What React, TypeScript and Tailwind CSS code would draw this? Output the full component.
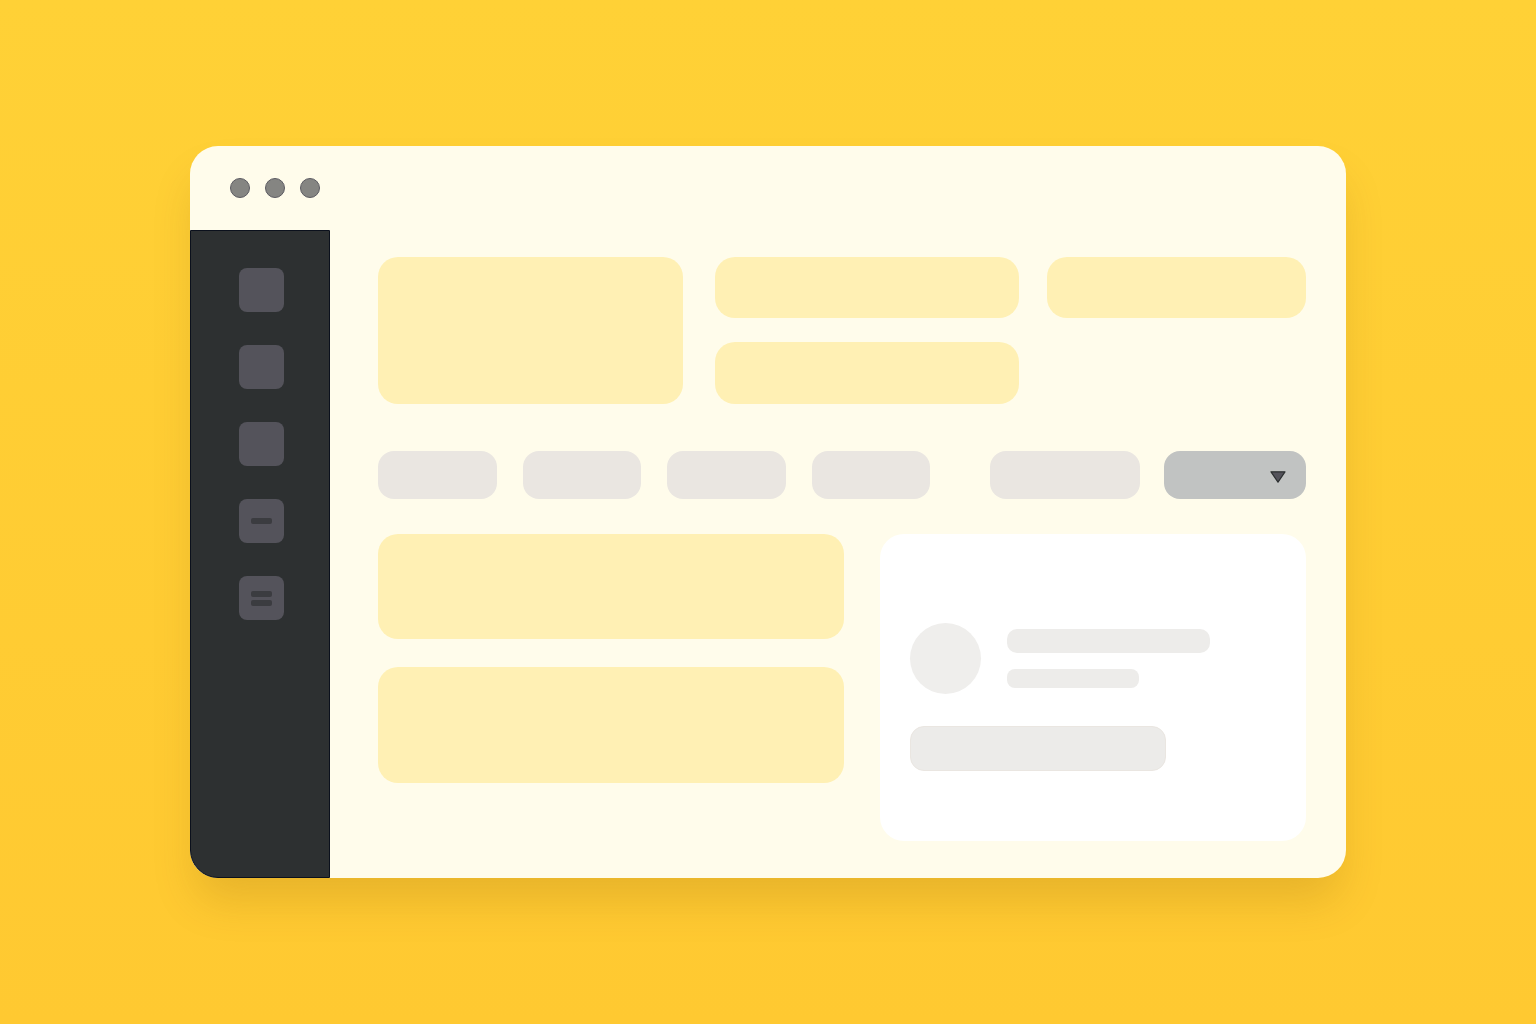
const navItems = [
  { name: "Home", bars: 0 },
  { name: "Projects", bars: 0 },
  { name: "Reports", bars: 0 },
  { name: "Notes", bars: 1 },
  { name: "Menu", bars: 2 },
]

const filters = ["All", "Open", "Done", "Archived"]

function Sidebar() {
  return (
    <nav aria-label="Main" className="w-[140px] shrink-0 rounded-bl-[28px] border border-[#0b101c] bg-[#2d3031] pt-[37px] pl-12">
      <ul className="flex flex-col gap-[33px]">
        {navItems.map((item) => (
          <li key={item.name} className="flex">
            <button type="button" aria-label={item.name} className="flex h-11 w-[45px] flex-col items-center justify-center gap-[3px] rounded-lg bg-[#54535b]">
              {Array.from({ length: item.bars }, (_, i) => (
                <span key={i} className="h-[6px] w-[21px] rounded-[2px] bg-[#3b3c40]" />
              ))}
            </button>
          </li>
        ))}
      </ul>
    </nav>
  )
}

function Tiles() {
  return (
    <section className="grid grid-cols-[305fr_591fr] gap-8">
      <div className="rounded-[20px] bg-[#fff0b4]" />
      <div className="grid grid-cols-[304fr_259fr] gap-x-7 gap-y-6">
        <div className="h-[61px] rounded-[20px] bg-[#fff0b4]" />
        <div className="h-[61px] rounded-[20px] bg-[#fff0b4]" />
        <div className="h-[62px] rounded-[20px] bg-[#fff0b4]" />
      </div>
    </section>
  )
}

function Toolbar() {
  return (
    <section className="mt-[47px] grid grid-cols-[552fr_316fr] gap-[60px]">
      <div className="grid grid-cols-4 gap-[26px]">
        {filters.map((filter) => (
          <button key={filter} type="button" aria-label={filter} className="h-12 rounded-2xl bg-[#eae6e1]" />
        ))}
      </div>
      <div className="grid grid-cols-[150fr_142fr] gap-6">
        <input type="text" aria-label="Search" className="h-12 w-full min-w-0 rounded-2xl bg-[#eae6e1] px-4" />
        <div className="relative">
          <select aria-label="Sort by" className="h-12 w-full appearance-none rounded-2xl bg-[#c1c3c2] px-4">
            <option value=""></option>
          </select>
          <svg viewBox="0 0 16 12" className="pointer-events-none absolute top-5 right-5 h-3 w-4" aria-hidden="true">
            <path d="M1 0.8H15L8 11.2Z" fill="#54535b" stroke="#2d3031" strokeWidth="1.2" strokeLinejoin="round" />
          </svg>
        </div>
      </div>
    </section>
  )
}

function ProfileCard() {
  return (
    <article className="rounded-[24px] bg-white pt-[89px] pb-[70px] pl-[30px]">
      <div className="flex items-center gap-[26px]">
        <div className="size-[71px] rounded-full bg-[#efeeec]" />
        <div className="flex flex-1 flex-col gap-4">
          <div className="h-6 w-[203px] rounded-[10px] bg-[#edecea]" />
          <div className="h-[19px] w-[132px] rounded-lg bg-[#edecea]" />
        </div>
      </div>
      <button type="button" aria-label="View profile" className="mt-8 block h-[45px] w-[256px] rounded-[14px] border border-[#eae6e1] bg-[#ecebe9]" />
    </article>
  )
}

export default function App() {
  return (
    <div className="flex min-h-screen items-center bg-linear-to-b from-[#ffd136] to-[#ffc931] px-[190px]">
      <div className="w-full rounded-[28px] bg-[#fffceb] shadow-[0_28px_44px_-6px_rgba(120,80,10,0.18)]">
        <header className="flex h-[84px] items-center gap-[15px] pl-10">
          <span className="size-5 rounded-full border border-[#5c5b62] bg-[#858582]" />
          <span className="size-5 rounded-full border border-[#5c5b62] bg-[#858582]" />
          <span className="size-5 rounded-full border border-[#5c5b62] bg-[#858582]" />
        </header>
        <div className="flex">
          <Sidebar />
          <main className="flex-1 pt-[27px] pr-10 pb-[37px] pl-12">
            <Tiles />
            <Toolbar />
            <section className="mt-[35px] grid grid-cols-[466fr_426fr] items-start gap-9">
              <div className="flex flex-col gap-7">
                <div className="h-[105px] rounded-[20px] bg-[#fff0b4]" />
                <div className="h-[116px] rounded-[20px] bg-[#fff0b4]" />
              </div>
              <ProfileCard />
            </section>
          </main>
        </div>
      </div>
    </div>
  )
}
